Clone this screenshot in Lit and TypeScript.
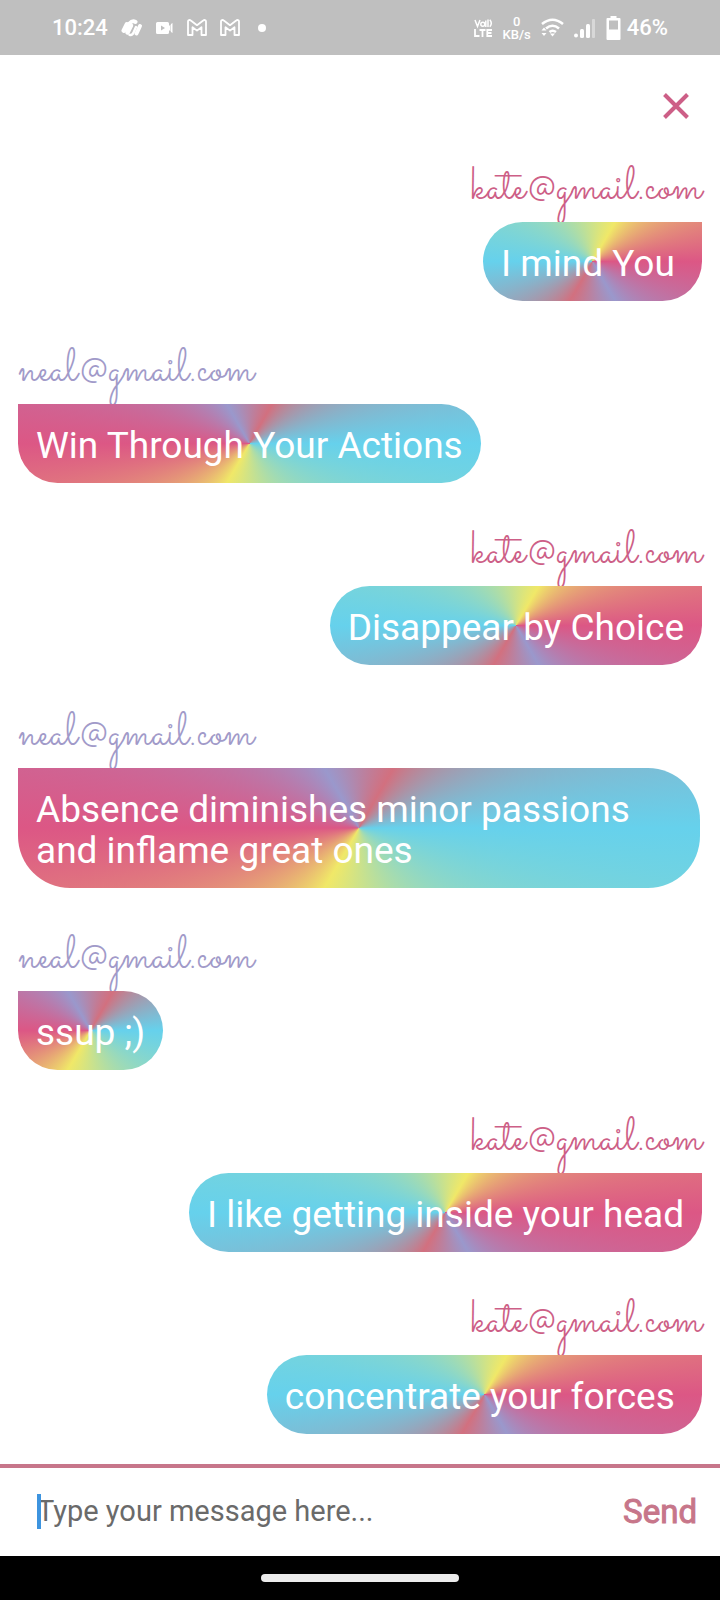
import { LitElement, html, css } from "lit";
import { customElement, property, state } from "lit/decorators.js";

interface Message {
  from: string;
  text: string;
  mine: boolean;
}

@customElement("status-bar")
class StatusBar extends LitElement {
  static styles = css`
    :host {
      display: flex;
      align-items: center;
      justify-content: space-between;
      box-sizing: border-box;
      height: 55px;
      padding: 0 52px;
      background: #bfbfbf;
      color: #fff;
      font-size: 22px;
      font-weight: 500;
      line-height: 26px;
    }
    .group {
      display: flex;
      align-items: center;
    }
    .left {
      gap: 13px;
    }
    .right {
      gap: 6px;
    }
    .stack {
      display: flex;
      flex-direction: column;
      align-items: center;
      font-size: 13px;
      line-height: 13px;
      margin: 0 4px;
    }
    svg {
      display: block;
    }
  `;

  private mail() {
    return html`<svg width="20" height="17" viewBox="0 0 20 17" fill="none" stroke="#fff" stroke-width="1.8" stroke-linejoin="round" aria-hidden="true">
      <path d="M1 16V2.6C1 1 2.6.5 3.8 1.5L10 6.2l6.200-4.700C17.400.500 19 1 19 2.600V16h-4.500V8.200L10 11.600 5.500 8.200V16z" />
    </svg>`;
  }

  render() {
    return html`
      <div class="group left">
        <span>10:24</span>
        <svg width="22" height="18" viewBox="0 0 22 18" fill="none" stroke="#fff" stroke-linecap="round" aria-hidden="true">
          <path d="M3 11.500 6 5.500" stroke-width="5" />
          <path d="M6.500 13.500 10 6.500" stroke-width="4.500" />
          <path d="M8.500 4.500q3-3.500 6-1.500" stroke-width="4" />
          <path d="M8.500 15.800c2.500.800 3.500-.7 4.200-2.500L15 8" stroke-width="2.400" />
          <path d="M15.500 14.500 19 7" stroke-width="4" />
        </svg>
        <svg width="18" height="12" viewBox="0 0 18 12" aria-hidden="true">
          <path fill="#fff" fill-rule="evenodd" d="M1.500 0h10Q13 0 13 1.500V4l1.500-1.500v7L13 8v2.500Q13 12 11.500 12h-10Q0 12 0 10.500v-9Q0 0 1.500 0zM5 3.500v5L9 6z" />
          <path fill="#fff" d="M15 2l1.500-1v10L15 10z" />
        </svg>
        ${this.mail()} ${this.mail()}
        <svg width="26" height="10" viewBox="0 0 26 10" aria-hidden="true">
          <circle cx="9" cy="5" r="4" fill="#fff" />
        </svg>
      </div>
      <div class="group right">
        <svg width="19" height="18" viewBox="0 0 19 18" fill="none" stroke="#fff" stroke-width="1.800" aria-label="VoLTE">
          <path d="M1 1l2.500 6.500L6 1M14 .5v7.500M11.800 1.500v6.500M15.800 .8q3 3.500 0 7" stroke-width="1.500" />
          <circle cx="8.800" cy="5.200" r="2" stroke-width="1.500" />
          <path d="M1 10v7h4.500M5.500 11h6M8.500 11v7M18 11h-4.700v6H18M13.300 14H17.500" />
        </svg>
        <span class="stack"><span>0</span><span>KB/s</span></span>
        <svg width="27" height="20" viewBox="0 0 27 20" fill="none" stroke="#fff" stroke-width="2.600" aria-hidden="true">
          <path d="M1 6q10.500-8.500 21 0M5 10.500q6.500-5.500 13 0M8.500 14q3-2.500 6.500 0" />
          <path d="M9 15.500h5L11.500 18.500zM.5 12.500 3 9.500l2.500 3zM.5 15h5L3 18z" fill="#fff" stroke="none" />
        </svg>
        <svg width="26" height="20" viewBox="0 0 26 20" fill="#fff" aria-hidden="true">
          <circle cx="2" cy="17.500" r="2" />
          <rect x="6" y="11" width="4" height="9" rx="1.500" />
          <rect x="12" y="6" width="4" height="14" rx="1.500" />
          <rect x="18" y="1" width="3" height="19" rx="1" opacity=".4" />
        </svg>
        <svg width="15" height="24" viewBox="0 0 15 24" aria-hidden="true">
          <path fill="#fff" fill-rule="evenodd" d="M4.500 0h6v2h3q1 0 1 1v20q0 1-1 1h-12q-1 0-1-1V3q0-1 1-1h3zM3 4.500v9h9v-9z" />
        </svg>
        <span>46%</span>
      </div>
    `;
  }
}

@customElement("chat-message")
class ChatMessage extends LitElement {
  @property({ attribute: false }) message!: Message;

  static styles = css`
    .message {
      display: flex;
      flex-direction: column;
      align-items: flex-start;
    }
    .mine {
      align-items: flex-end;
    }
    .sender {
      color: #a19ac9;
      font: 400 46px/46px "Sacramento", "Lato", cursive;
      padding-bottom: 10px;
    }
    .mine .sender {
      color: #cd5f87;
    }
    .bubble {
      box-sizing: border-box;
      max-width: calc(100% - 2px);
      padding: 21px 18px 17px;
      border-radius: 0 52px 52px 52px;
      background: conic-gradient(from 270deg, #dc5785, #9a98cc 60deg, #d2707f 120deg, #66d1ec 180deg, #f0e868 300deg, #dc5785 360deg);
      color: #fff;
      font-size: 37px;
      line-height: 41px;
      white-space: break-spaces;
    }
    .mine .bubble {
      border-radius: 52px 0 52px 52px;
      background: conic-gradient(from 90deg, #dc5785, #9a98cc 60deg, #d2707f 120deg, #66d1ec 180deg, #f0e868 300deg, #dc5785 360deg);
    }
  `;

  render() {
    const { from, text, mine } = this.message;
    return html`<div class="message ${mine ? "mine" : ""}">
      <div class="sender">${from}</div>
      <div class="bubble">${text}</div>
    </div>`;
  }
}

@customElement("app-root")
class AppRoot extends LitElement {
  @state() private messages: Message[] = [
    { from: "kate@gmail.com", text: "I mind You ", mine: true },
    { from: "neal@gmail.com", text: "Win Through Your Actions", mine: false },
    { from: "kate@gmail.com", text: "Disappear by Choice", mine: true },
    { from: "neal@gmail.com", text: "Absence diminishes minor passions and inflame great ones", mine: false },
    { from: "neal@gmail.com", text: "ssup ;)", mine: false },
    { from: "kate@gmail.com", text: "I like getting inside your head", mine: true },
    { from: "kate@gmail.com", text: "concentrate your forces ", mine: true },
  ];
  @state() private draft = "";

  static styles = css`
    :host {
      display: flex;
      flex-direction: column;
      min-height: 100vh;
      background: #fff;
      font-family: "Roboto", sans-serif;
    }
    .top {
      display: flex;
      justify-content: flex-end;
      padding: 35px 28px 0;
    }
    button {
      border: 0;
      padding: 0;
      background: none;
      font-family: inherit;
      cursor: pointer;
    }
    .close {
      display: grid;
      place-items: center;
      width: 32px;
      height: 32px;
    }
    .list {
      flex: 1;
      display: flex;
      flex-direction: column;
      gap: 47px;
      padding: 44px 18px 30px;
    }
    .composer {
      display: flex;
      align-items: center;
      box-sizing: border-box;
      height: 92px;
      padding: 0 23px 0 37px;
      border-top: 4px solid #c7768a;
    }
    .field {
      position: relative;
      flex: 1;
      min-width: 0;
      display: flex;
      padding-bottom: 4px;
    }
    .caret {
      position: absolute;
      left: 0;
      top: 5px;
      width: 4px;
      height: 35px;
      background: #3d94df;
    }
    input {
      flex: 1;
      min-width: 0;
      height: 42px;
      border: 0;
      padding: 0;
      outline: 0;
      background: none;
      color: #333;
      font-family: inherit;
      font-size: 30px;
    }
    input::placeholder {
      color: #6a6a6a;
      opacity: 1;
      font-size: 29px;
    }
    .send {
      color: #c7768a;
      font-size: 33px;
      line-height: 40px;
      font-weight: 400;
      -webkit-text-stroke: 1px currentColor;
    }
    .nav {
      display: grid;
      place-items: center;
      height: 44px;
      background: #000;
    }
    .handle {
      width: 198px;
      height: 8px;
      border-radius: 4px;
      background: #ececec;
    }
  `;

  private send(event: Event) {
    event.preventDefault();
    if (!this.draft.trim()) return;
    this.messages = [...this.messages, { from: "kate@gmail.com", text: this.draft, mine: true }];
    this.draft = "";
  }

  render() {
    return html`
      <status-bar></status-bar>
      <div class="top">
        <button class="close" type="button" aria-label="Close">
          <svg width="26" height="26" viewBox="0 0 26 26" fill="none" stroke="#cd5f87" stroke-width="4" aria-hidden="true">
            <path d="M1.500 1.500l23 23M24.500 1.500l-23 23" />
          </svg>
        </button>
      </div>
      <main class="list">
        ${this.messages.map((m) => html`<chat-message .message=${m}></chat-message>`)}
      </main>
      <form class="composer" @submit=${this.send}>
        <div class="field">
          <input
            type="text"
            aria-label="Message"
            placeholder="Type your message here..."
            .value=${this.draft}
            @input=${(e: Event) => (this.draft = (e.target as HTMLInputElement).value)}
          />
          ${this.draft ? "" : html`<span class="caret"></span>`}
        </div>
        <button class="send" type="submit">Send</button>
      </form>
      <div class="nav"><div class="handle"></div></div>
    `;
  }
}
